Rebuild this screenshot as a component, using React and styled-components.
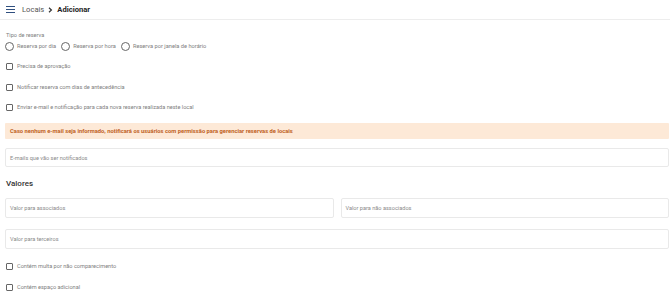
import React from "react";
import styled, { createGlobalStyle } from "styled-components";

const GlobalStyle = createGlobalStyle`
  html, body {
    margin: 0;
    padding: 0;
    background: #fff;
    font-family: Roboto, "Liberation Sans", sans-serif;
  }
`;

const Page = styled.div`
  width: 670px;
  height: 300px;
  overflow: hidden;
  background: #fff;
`;

const Header = styled.header`
  height: 19px;
  border-bottom: 1px solid #ededed;
  display: flex;
  align-items: center;
  padding-left: 6px;
  gap: 7px;
`;

const Burger = styled.div`
  width: 9px;
  display: flex;
  flex-direction: column;
  gap: 1.6px;
  span {
    display: block;
    height: 1.2px;
    background: #2f4f7f;
  }
`;

const Crumbs = styled.div`
  display: flex;
  align-items: center;
  gap: 4px;
  font-size: 7.6px;
  color: #555;
`;

const Current = styled.span`
  font-weight: 700;
  color: #222;
`;

const Content = styled.main`
  padding: 11px 1px 0 5px;
  display: flex;
  flex-direction: column;
`;

const SmallLabel = styled.div`
  font-size: 5.6px;
  line-height: 8px;
  color: #808080;
  padding-left: 1px;
`;

const RadioGroup = styled.div`
  margin-top: 2px;
  height: 10px;
  display: flex;
  align-items: center;
  gap: 5px;
`;

const RadioItem = styled.label`
  display: flex;
  align-items: center;
  gap: 3px;
  font-size: 5.7px;
  color: #808080;
`;

const Circle = styled.span`
  width: 7px;
  height: 7px;
  border: 1px solid #666;
  border-radius: 50%;
`;

const CheckRow = styled.label`
  margin-top: ${(p) => p.$mt || 0}px;
  height: 20px;
  display: flex;
  align-items: center;
  gap: 4px;
  padding-left: 1px;
  font-size: 5.6px;
  color: #808080;
`;

const Box = styled.span`
  width: 5px;
  height: 5px;
  border: 1px solid #666;
  border-radius: 1px;
`;

const Alert = styled.div`
  margin-top: ${(p) => p.$mt || 0}px;
  height: 16px;
  display: flex;
  align-items: center;
  padding-left: 5px;
  background: #fde9d7;
  color: #c0621f;
  font-size: 5.8px;
  font-weight: 700;
  border-radius: 1px;
`;

const Field = styled.div`
  margin-top: ${(p) => p.$mt || 0}px;
  flex: ${(p) => (p.$grow ? "1 1 0" : "none")};
  height: ${(p) => p.$h || 20}px;
  box-sizing: border-box;
  border: 1px solid #e9e9e9;
  border-radius: 2px;
  display: flex;
  align-items: center;
  padding-left: 4px;
  font-size: 5.6px;
  color: #8a8a8a;
`;

const FieldRow = styled.div`
  margin-top: ${(p) => p.$mt || 0}px;
  display: flex;
  gap: 7px;
`;

const SectionTitle = styled.h2`
  margin: 12px 0 0 1px;
  height: 10px;
  line-height: 10px;
  font-size: 8px;
  font-weight: 500;
  color: #333;
`;

function Check({ children, mt }) {
  return (
    <CheckRow $mt={mt}>
      <Box />
      {children}
    </CheckRow>
  );
}

export default function App() {
  return (
    <Page>
      <GlobalStyle />
      <Header>
        <Burger>
          <span />
          <span />
          <span />
        </Burger>
        <Crumbs>
          <span>Locais</span>
          <svg width="5" height="6" viewBox="0 0 5 6">
            <path d="M1 0.8 L3.4 3 L1 5.2" fill="none" stroke="#333" strokeWidth="1.2" />
          </svg>
          <Current>Adicionar</Current>
        </Crumbs>
      </Header>
      <Content>
        <SmallLabel>Tipo de reserva</SmallLabel>
        <RadioGroup>
          <RadioItem>
            <Circle />
            Reserva por dia
          </RadioItem>
          <RadioItem>
            <Circle />
            Reserva por hora
          </RadioItem>
          <RadioItem>
            <Circle />
            Reserva por janela de horário
          </RadioItem>
        </RadioGroup>
        <Check mt={5}>Precisa de aprovação</Check>
        <Check mt={1}>Notificar reserva com dias de antecedência</Check>
        <Check>Enviar e-mail e notificação para cada nova reserva realizada neste local</Check>
        <Alert $mt={6}>
          Caso nenhum e-mail seja informado, notificará os usuários com permissão para gerenciar reservas de locais
        </Alert>
        <Field $mt={9} $h={19}>E-mails que vão ser notificados</Field>
        <SectionTitle>Valores</SectionTitle>
        <FieldRow $mt={9}>
          <Field $grow>Valor para associados</Field>
          <Field $grow>Valor para não associados</Field>
        </FieldRow>
        <Field $mt={11}>Valor para terceiros</Field>
        <Check mt={7}>Contém multa por não comparecimento</Check>
        <Check mt={1}>Contém espaço adicional</Check>
      </Content>
    </Page>
  );
}
